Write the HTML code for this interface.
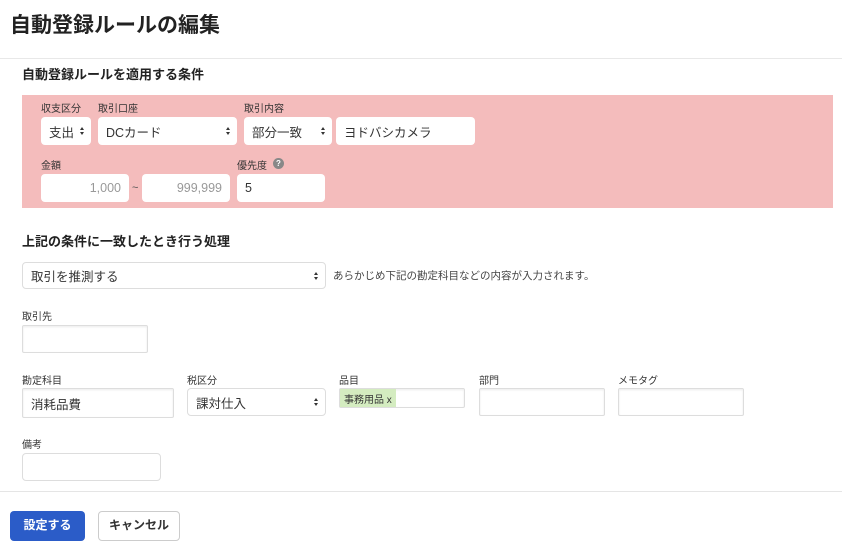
<!DOCTYPE html>
<html><head><meta charset="utf-8"><style>
*{box-sizing:border-box;margin:0;padding:0}
body{width:842px;height:539px;overflow:hidden;background:#fff;font-family:"Liberation Sans","Noto Sans CJK JP",sans-serif;color:#333;position:relative}
.a{position:absolute}
.lbl{font-size:10px;color:#333}
.box{position:absolute;background:#fff;border:1px solid #ddd;border-radius:4px;font-size:12.5px;display:flex;align-items:center;padding:0 8px;color:#333}
.sel::after{content:"";position:absolute;right:7px;top:50%;margin-top:-4px;width:0;height:0;border-left:2.5px solid transparent;border-right:2.5px solid transparent;border-bottom:3px solid #333}
.sel::before{content:"";position:absolute;right:7px;top:50%;margin-top:1px;width:0;height:0;border-left:2.5px solid transparent;border-right:2.5px solid transparent;border-top:3px solid #333}
.sq{border-radius:2px;border-color:#ddd;box-shadow:inset 0 1px 2px rgba(0,0,0,.08)}
</style></head><body>
<div class="a" style="left:10px;top:9px;font-size:21px;font-weight:bold;color:#222">自動登録ルールの編集</div>
<div class="a" style="left:0;top:58px;width:842px;height:1px;background:#e8e8e8"></div>
<div class="a" style="left:22px;top:64px;font-size:13px;font-weight:bold;color:#222">自動登録ルールを適用する条件</div>
<div class="a" style="left:22px;top:95px;width:811px;height:113px;background:#f4bcbc"></div>
<div class="a lbl" style="left:41px;top:100px">収支区分</div>
<div class="a lbl" style="left:98px;top:100px">取引口座</div>
<div class="a lbl" style="left:244px;top:100px">取引内容</div>
<div class="box sel" style="left:41px;top:117px;width:50px;height:28px;border:none">支出</div>
<div class="box sel" style="left:98px;top:117px;width:139px;height:28px;border:none">DCカード</div>
<div class="box sel" style="left:244px;top:117px;width:88px;height:28px;border:none">部分一致</div>
<div class="box" style="left:336px;top:117px;width:139px;height:28px;border:none">ヨドバシカメラ</div>
<div class="a lbl" style="left:41px;top:157px">金額</div>
<div class="a lbl" style="left:237px;top:157px">優先度</div>
<div class="a" style="left:273px;top:158px;width:11px;height:11px;border-radius:50%;background:#888;color:#fff;font-size:8px;font-weight:bold;text-align:center;line-height:11px">?</div>
<div class="box" style="left:41px;top:174px;width:88px;height:28px;border:none;justify-content:flex-end;color:#999">1,000</div>
<div class="a" style="left:132px;top:182px;font-size:11px;color:#555">~</div>
<div class="box" style="left:142px;top:174px;width:88px;height:28px;border:none;justify-content:flex-end;color:#999">999,999</div>
<div class="box" style="left:237px;top:174px;width:88px;height:28px;border:none">5</div>
<div class="a" style="left:22px;top:231px;font-size:13px;font-weight:bold;color:#222">上記の条件に一致したとき行う処理</div>
<div class="box sel" style="left:22px;top:262px;width:304px;height:27px">取引を推測する</div>
<div class="a" style="left:333px;top:268px;font-size:10.5px;color:#444">あらかじめ下記の勘定科目などの内容が入力されます。</div>
<div class="a lbl" style="left:22px;top:308px">取引先</div>
<div class="box sq" style="left:22px;top:325px;width:126px;height:28px"></div>
<div class="a lbl" style="left:22px;top:372px">勘定科目</div>
<div class="a lbl" style="left:187px;top:372px">税区分</div>
<div class="a lbl" style="left:339px;top:372px">品目</div>
<div class="a lbl" style="left:479px;top:372px">部門</div>
<div class="a lbl" style="left:618px;top:372px">メモタグ</div>
<div class="box sq" style="left:22px;top:388px;width:152px;height:30px">消耗品費</div>
<div class="box sel" style="left:187px;top:388px;width:139px;height:28px">課対仕入</div>
<div class="box sq" style="left:339px;top:388px;width:126px;height:20px;padding:0"><span style="background:#d4ecc0;height:18px;display:flex;align-items:center;padding:0 4px;font-size:10px">事務用品 x</span></div>
<div class="box sq" style="left:479px;top:388px;width:126px;height:28px"></div>
<div class="box sq" style="left:618px;top:388px;width:126px;height:28px"></div>
<div class="a lbl" style="left:22px;top:436px">備考</div>
<div class="box" style="left:22px;top:453px;width:139px;height:28px"></div>
<div class="a" style="left:0;top:491px;width:842px;height:1px;background:#e5e5e5"></div>
<div class="a" style="left:10px;top:511px;width:75px;height:30px;background:#2b5cc8;border-radius:4px;color:#fff;font-size:12px;font-weight:bold;text-align:center;line-height:28px">設定する</div>
<div class="a" style="left:98px;top:511px;width:82px;height:30px;border:1px solid #ccc;border-radius:4px;color:#333;font-size:12px;font-weight:bold;text-align:center;line-height:26px">キャンセル</div>
</body></html>
